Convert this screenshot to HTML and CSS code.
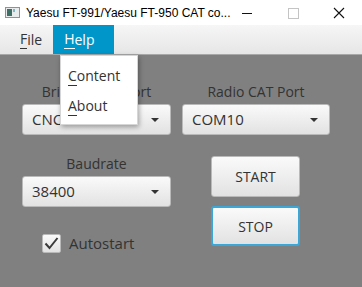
FILE: index.html
```html
<!DOCTYPE html>
<html lang="en">
<head>
    <meta charset="UTF-8">
    <title>Yaesu FT-991/Yaesu FT-950 CAT converter</title>
    <link rel="stylesheet" href="styles.css">
</head>
<body>
    <div class="window">
        <!-- Title bar -->
        <div class="titlebar">
            <svg class="app-icon" width="15" height="11" viewBox="0 0 15 11">
                <rect x="0.5" y="0.5" width="14" height="10" fill="#e8ecec" stroke="#8a9494"/>
                <rect x="2" y="2" width="5" height="7" fill="#3d6f66"/>
                <rect x="8" y="2" width="2" height="3" fill="#7fb7c7"/>
            </svg>
            <span class="title">Yaesu FT-991/Yaesu FT-950 CAT co...</span>
            <div class="controls">
                <svg width="12" height="12" viewBox="0 0 12 12"><line x1="1" y1="6.5" x2="11" y2="6.5" stroke="#111" stroke-width="1"/></svg>
                <svg width="12" height="12" viewBox="0 0 12 12"><rect x="1.5" y="1.5" width="10" height="10" fill="none" stroke="#c4c4c4"/></svg>
                <svg width="12" height="12" viewBox="0 0 12 12"><path d="M1 1 L11 11 M11 1 L1 11" stroke="#111" stroke-width="1.1"/></svg>
            </div>
        </div>

        <!-- Menu bar -->
        <div class="menubar">
            <span class="menu"><u>F</u>ile</span>
            <span class="menu active"><u>H</u>elp</span>
        </div>

        <!-- Main form -->
        <div class="content">
            <div class="field">
                <label>Bridge COM Port</label>
                <div class="combo">CNC01</div>
            </div>
            <div class="field">
                <label>Radio CAT Port</label>
                <div class="combo">COM10</div>
            </div>
            <div class="field">
                <label>Baudrate</label>
                <div class="combo">38400</div>
            </div>
            <div class="buttons">
                <button class="btn">START</button>
                <button class="btn focused">STOP</button>
            </div>
            <div class="check-row">
                <span class="checkbox">
                    <svg width="15" height="13" viewBox="0 0 15 13"><path d="M1.5 6.5 L5.5 11 L13.5 1" fill="none" stroke="#3a3a3a" stroke-width="2"/></svg>
                </span>
                <span>Autostart</span>
            </div>
        </div>

        <!-- Open Help menu -->
        <div class="popup">
            <div class="popup-item"><u>C</u>ontent</div>
            <div class="popup-item"><u>A</u>bout</div>
        </div>
    </div>
</body>
</html>
```

FILE: styles.css
```css
body {
    margin: 0;
    font-family: "Open Sans", "Noto Sans", sans-serif;
    background: #808080;
}

.window {
    position: relative;
    width: 362px;
    height: 287px;
    overflow: hidden;
    background: #808080;
}

/* Title bar */
.titlebar {
    display: flex;
    align-items: center;
    height: 25px;
    background: #fff;
    font-family: "Liberation Sans", sans-serif;
    font-size: 12px;
    color: #000;
}

.app-icon {
    margin-left: 5px;
    margin-right: 6px;
}

.title {
    flex: 1;
}

.controls {
    display: flex;
    gap: 34px;
    margin-right: 17px;
}

/* Menu bar */
.menubar {
    display: flex;
    height: 30px;
    background: linear-gradient(#f6f6f6, #e6e6e6);
    border-bottom: 1px solid #a8a8a8;
    box-sizing: border-box;
    font-size: 14px;
    color: #333;
}

.menu {
    display: flex;
    align-items: center;
    padding: 0 11px 0 20px;
}

.menu.active {
    background: #0096c9;
    color: #fff;
    padding: 0 20px 0 11px;
}

u {
    text-decoration: none;
    border-bottom: 1px solid currentColor;
    display: inline-block;
    line-height: 1.3;
}

/* Form */
.content {
    display: grid;
    grid-template-columns: 149px 148px;
    column-gap: 11px;
    padding: 27px 0 0 22px;
    font-size: 14px;
    color: #333;
}

.field {
    display: flex;
    flex-direction: column;
    align-items: center;
}

.field label {
    height: 22px;
}

.combo {
    position: relative;
    align-self: stretch;
    height: 31px;
    box-sizing: border-box;
    padding-left: 9px;
    line-height: 29px;
    font-size: 15px;
    border: 1px solid #b9b9b9;
    border-radius: 3px;
    background: linear-gradient(#fafafa, #e2e2e2);
}

.combo::after {
    content: "";
    position: absolute;
    right: 11px;
    top: 13px;
    border-left: 4px solid transparent;
    border-right: 4px solid transparent;
    border-top: 4px solid #333;
}

.field:nth-child(3) {
    margin-top: 19px;
}

.buttons {
    display: flex;
    flex-direction: column;
    align-items: center;
    gap: 9px;
    margin-top: 21px;
    padding-right: 1px;
}

.btn {
    width: 89px;
    height: 41px;
    border: 1px solid #b9b9b9;
    border-radius: 3px;
    background: linear-gradient(#fafafa, #e2e2e2);
    font-family: inherit;
    font-size: 14px;
    color: #333;
}

.btn.focused {
    height: 40px;
    border: 2px solid #3aa7d8;
}

.check-row {
    display: flex;
    align-items: center;
    gap: 8px;
    margin-top: -13px;
    padding-left: 20px;
    font-size: 15px;
}

.checkbox {
    display: flex;
    align-items: center;
    justify-content: center;
    width: 19px;
    height: 19px;
    box-sizing: border-box;
    border: 1px solid #b9b9b9;
    border-radius: 2px;
    background: linear-gradient(#fafafa, #e2e2e2);
}

/* Open menu */
.popup {
    position: absolute;
    left: 60px;
    top: 55px;
    width: 78px;
    height: 70px;
    box-sizing: border-box;
    padding-top: 10px;
    background: #fff;
    border: 1px solid #d6d6d6;
    box-shadow: 1px 2px 5px rgba(0, 0, 0, 0.35);
    font-size: 14px;
    color: #333;
}

.popup-item {
    height: 30px;
    padding-left: 7px;
}
```
